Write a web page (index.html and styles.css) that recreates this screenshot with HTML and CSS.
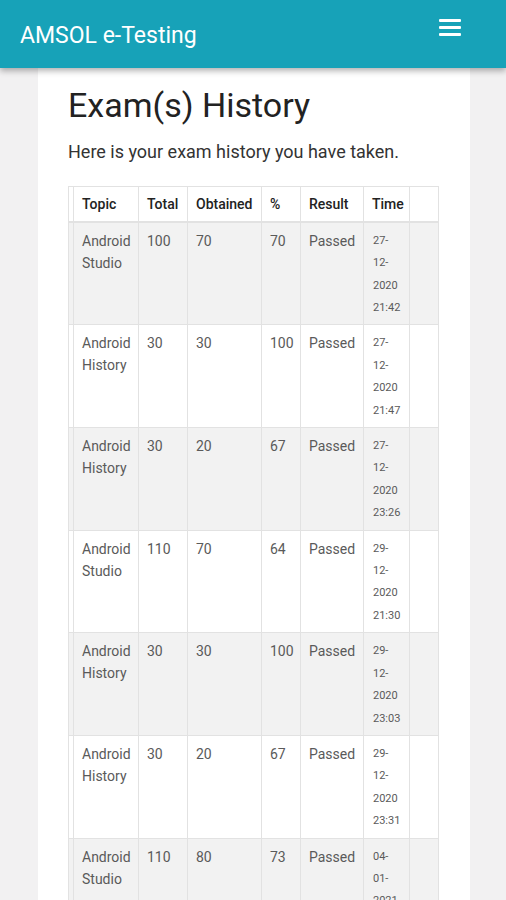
FILE: index.html
```html
<!DOCTYPE html>
<html lang="en">
<head>
    <meta charset="UTF-8">
    <meta name="viewport" content="width=device-width, initial-scale=1.0">
    <title>AMSOL e-Testing</title>
    <link rel="stylesheet" href="styles.css">
</head>
<body>
    <nav class="navbar">
        <span class="brand">AMSOL e-Testing</span>
        <button class="menu-btn" aria-label="Menu">
            <svg width="22" height="19" viewBox="0 0 22 19">
                <rect x="0" y="1" width="22" height="3" rx="1" fill="#fff"/>
                <rect x="0" y="8" width="22" height="3" rx="1" fill="#fff"/>
                <rect x="0" y="15" width="22" height="3" rx="1" fill="#fff"/>
            </svg>
        </button>
    </nav>

    <main class="card">
        <h1>Exam(s) History</h1>
        <p class="lead">Here is your exam history you have taken.</p>

        <table class="history">
            <colgroup>
                <col style="width: 5px">
                <col style="width: 65px">
                <col style="width: 49px">
                <col style="width: 74px">
                <col style="width: 39px">
                <col style="width: 63px">
                <col style="width: 46px">
                <col>
            </colgroup>
            <thead>
                <tr>
                    <th class="gap"></th>
                    <th>Topic</th>
                    <th>Total</th>
                    <th>Obtained</th>
                    <th>%</th>
                    <th>Result</th>
                    <th>Time</th>
                    <th></th>
                </tr>
            </thead>
            <tbody>
                <tr>
                    <td class="gap"></td>
                    <td>Android Studio</td>
                    <td>100</td>
                    <td>70</td>
                    <td>70</td>
                    <td>Passed</td>
                    <td class="time">27-<br>12-<br>2020<br>21:42</td>
                    <td></td>
                </tr>
                <tr>
                    <td class="gap"></td>
                    <td>Android History</td>
                    <td>30</td>
                    <td>30</td>
                    <td>100</td>
                    <td>Passed</td>
                    <td class="time">27-<br>12-<br>2020<br>21:47</td>
                    <td></td>
                </tr>
                <tr>
                    <td class="gap"></td>
                    <td>Android History</td>
                    <td>30</td>
                    <td>20</td>
                    <td>67</td>
                    <td>Passed</td>
                    <td class="time">27-<br>12-<br>2020<br>23:26</td>
                    <td></td>
                </tr>
                <tr>
                    <td class="gap"></td>
                    <td>Android Studio</td>
                    <td>110</td>
                    <td>70</td>
                    <td>64</td>
                    <td>Passed</td>
                    <td class="time">29-<br>12-<br>2020<br>21:30</td>
                    <td></td>
                </tr>
                <tr>
                    <td class="gap"></td>
                    <td>Android History</td>
                    <td>30</td>
                    <td>30</td>
                    <td>100</td>
                    <td>Passed</td>
                    <td class="time">29-<br>12-<br>2020<br>23:03</td>
                    <td></td>
                </tr>
                <tr>
                    <td class="gap"></td>
                    <td>Android History</td>
                    <td>30</td>
                    <td>20</td>
                    <td>67</td>
                    <td>Passed</td>
                    <td class="time">29-<br>12-<br>2020<br>23:31</td>
                    <td></td>
                </tr>
                <tr>
                    <td class="gap"></td>
                    <td>Android Studio</td>
                    <td>110</td>
                    <td>80</td>
                    <td>73</td>
                    <td>Passed</td>
                    <td class="time">04-<br>01-<br>2021<br>11:02</td>
                    <td></td>
                </tr>
            </tbody>
        </table>
    </main>
</body>
</html>
```

FILE: styles.css
```css
body {
    margin: 0;
    padding: 0;
    background-color: #f2f1f2;
    font-family: Roboto, "Noto Sans", Arial, sans-serif;
    color: #212529;
}

.navbar {
    position: relative;
    z-index: 2;
    height: 68px;
    background-color: #17a2b8;
    display: flex;
    align-items: center;
    justify-content: space-between;
    padding: 0 45px 0 20px;
    box-shadow: 0 3px 6px rgba(0, 0, 0, 0.3);
}

.brand {
    color: white;
    font-size: 23px;
    margin-top: 2px;
}

.menu-btn {
    background: none;
    border: none;
    padding: 0;
    margin-top: -14px;
    display: flex;
}

.card {
    background-color: white;
    margin: 0 36px 0 38px;
    padding: 17px 31px 0 30px;
    min-height: 832px;
}

.card h1 {
    margin: 0 0 12px;
    font-size: 34px;
    font-weight: 400;
    line-height: 1.2;
    color: #222;
}

.lead {
    margin: 0 0 21px;
    font-size: 18px;
    line-height: 27px;
    color: #333;
}

.history {
    width: 100%;
    table-layout: fixed;
    border-collapse: collapse;
    font-size: 14px;
    color: #5a5a5a;
}

.history th,
.history td {
    border: 1px solid #e2e2e2;
    padding: 7px 8px 5px;
    text-align: left;
    vertical-align: top;
    line-height: 22px;
    overflow: hidden;
}

.history th {
    color: #222;
    font-weight: 500;
    padding: 7px 8px;
    line-height: 20px;
    border-bottom-width: 2px;
}

.history .gap {
    padding: 0;
}

.history tbody tr:nth-child(odd) {
    background-color: #f2f2f2;
}

.history .time {
    font-size: 11px;
    line-height: 22.4px;
    padding-left: 9px;
    padding-right: 4px;
}
```
